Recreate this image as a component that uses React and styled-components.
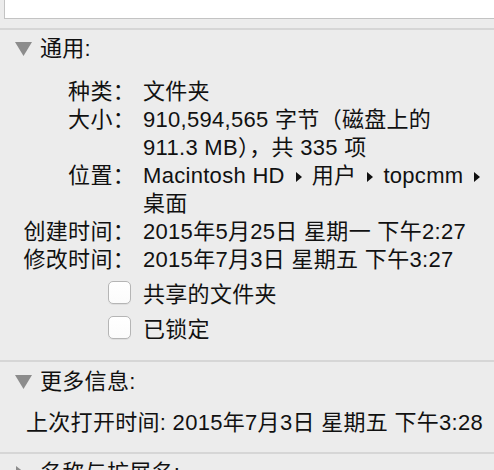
import React from "react";
import styled, { createGlobalStyle } from "styled-components";

const GlobalStyle = createGlobalStyle`
  html, body {
    margin: 0;
    padding: 0;
    background: #ececec;
  }
  body {
    width: 494px;
    height: 470px;
    overflow: hidden;
    font-family: "Liberation Sans", "Noto Sans CJK SC", sans-serif;
    font-size: 22px;
    letter-spacing: 0.3px;
    color: #111;
  }
`;

const Window = styled.div`
  display: flex;
  flex-direction: column;
  width: 494px;
`;

const NameField = styled.div`
  height: 18px;
  margin-left: 4px;
  margin-bottom: 9px;
  background: #fff;
  border-left: 1px solid #c3c3c3;
  border-bottom: 1px solid #c3c3c3;
`;

const Section = styled.section`
  border-top: 2px solid #d6d6d6;
  padding-top: ${(p) => p.$top}px;
  padding-bottom: ${(p) => p.$bottom}px;
  display: flex;
  flex-direction: column;
`;

const Header = styled.div`
  display: flex;
  align-items: center;
  height: 28px;
  padding-left: 15px;
  gap: 8px;
  line-height: 28px;
  white-space: nowrap;
`;

const InfoGrid = styled.div`
  display: grid;
  grid-template-columns: 135px auto;
  column-gap: 8px;
  margin-top: 15px;
  line-height: 28px;
`;

const Label = styled.div`
  text-align: right;
  white-space: nowrap;
`;

const Value = styled.div`
  white-space: nowrap;
`;

const Checks = styled.div`
  display: flex;
  flex-direction: column;
  gap: 7px;
  margin-top: 4px;
`;

const CheckRow = styled.label`
  display: flex;
  align-items: center;
  height: 28px;
  padding-left: 108px;
  gap: 12px;
  white-space: nowrap;
`;

const Box = styled.span`
  box-sizing: border-box;
  width: 23px;
  height: 23px;
  background: linear-gradient(#ffffff, #fbfbfb);
  border: 1px solid #b5b5b5;
  border-radius: 5px;
  box-shadow: 0 1px 0 rgba(0, 0, 0, 0.06);
`;

const Line = styled.div`
  margin-top: 13px;
  padding-left: 26px;
  line-height: 28px;
  white-space: nowrap;
`;

const PathSep = styled.svg`
  display: inline-block;
  width: 6px;
  height: 10px;
  margin: 0 10px 0 11px;
  vertical-align: 1px;
`;

const Disclosure = ({ open }) =>
  open ? (
    <svg width="17" height="14" viewBox="0 0 17 14">
      <polygon points="0,0 17,0 8.5,14" fill="#8c8c8c" />
    </svg>
  ) : (
    <svg width="17" height="14" viewBox="0 0 17 14">
      <polygon points="1,0 10,7 1,14" fill="#8c8c8c" />
    </svg>
  );

const Sep = () => (
  <PathSep viewBox="0 0 6 10">
    <polygon points="0,0 6,5 0,10" fill="#111" />
  </PathSep>
);

export default function App() {
  return (
    <>
      <GlobalStyle />
      <Window>
        <NameField />
        <Section $top={5} $bottom={19}>
          <Header>
            <Disclosure open />
            <span>通用:</span>
          </Header>
          <InfoGrid>
            <Label>种类：</Label>
            <Value>文件夹</Value>
            <Label>大小：</Label>
            <Value>
              910,594,565 字节（磁盘上的
              <br />
              911.3 MB），共 335 项
            </Value>
            <Label>位置：</Label>
            <Value>
              Macintosh HD<Sep />用户<Sep />topcmm<Sep />
              <br />
              桌面
            </Value>
            <Label>创建时间：</Label>
            <Value>2015年5月25日 星期一 下午2:27</Value>
            <Label>修改时间：</Label>
            <Value>2015年7月3日 星期五 下午3:27</Value>
          </InfoGrid>
          <Checks>
            <CheckRow>
              <Box />
              <span>共享的文件夹</span>
            </CheckRow>
            <CheckRow>
              <Box />
              <span>已锁定</span>
            </CheckRow>
          </Checks>
        </Section>
        <Section $top={6} $bottom={15}>
          <Header>
            <Disclosure open />
            <span>更多信息:</span>
          </Header>
          <Line>上次打开时间: 2015年7月3日 星期五 下午3:28</Line>
        </Section>
        <Section $top={5} $bottom={0}>
          <Header>
            <Disclosure />
            <span>名称与扩展名:</span>
          </Header>
        </Section>
      </Window>
    </>
  );
}
